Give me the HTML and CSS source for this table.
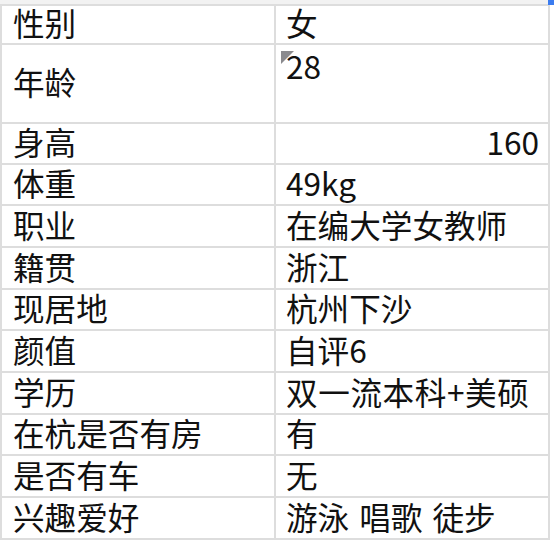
FILE: index.html
```html
<!DOCTYPE html>
<html lang="zh-CN">
<head>
<meta charset="utf-8">
<link rel="stylesheet" href="styles.css">
</head>
<body>
<div class="topbar"><span class="sel-handle"></span></div>
<div class="sheet">
  <div class="cell">性别</div><div class="cell">女</div>
  <div class="cell">年龄</div><div class="cell cell-top has-note">28</div>
  <div class="cell">身高</div><div class="cell cell-num">160</div>
  <div class="cell">体重</div><div class="cell">49kg</div>
  <div class="cell">职业</div><div class="cell">在编大学女教师</div>
  <div class="cell">籍贯</div><div class="cell">浙江</div>
  <div class="cell">现居地</div><div class="cell">杭州下沙</div>
  <div class="cell">颜值</div><div class="cell">自评6</div>
  <div class="cell">学历</div><div class="cell cell-wide">双一流本科+美硕</div>
  <div class="cell">在杭是否有房</div><div class="cell">有</div>
  <div class="cell">是否有车</div><div class="cell">无</div>
  <div class="cell">兴趣爱好</div><div class="cell cell-words">游泳 唱歌 徒步</div>
</div>
</body>
</html>
```
FILE: styles.css
```css
html, body {
  margin: 0;
  padding: 0;
  background: #ffffff;
}
body {
  width: 554px;
  height: 540px;
  overflow: hidden;
  font-family: "Noto Sans CJK SC", "Noto Sans", sans-serif;
  color: #111111;
}
.topbar {
  height: 4px;
  background: #f2f2f2;
  display: flex;
  justify-content: flex-end;
}
.sel-handle {
  width: 6px;
  height: 5px;
  background: #3b7cf0;
  position: relative;
  z-index: 2;
}
.sheet {
  display: grid;
  width: 546px;
  grid-template-columns: 272px 272px;
  grid-template-rows: 37px 77px 39px 39px 40px 40px 39px 40px 40px 39px 40px 40px;
  gap: 2px;
  padding: 2px;
  background: #dddddd;
}
.cell {
  background: #ffffff;
  display: flex;
  align-items: center;
  font-size: 31.6px;
  line-height: 1;
  padding-left: 11px;
  padding-bottom: 3px;
  white-space: pre;
  position: relative;
}
.cell:nth-child(even) {
  padding-left: 10px;
}
.cell-top {
  align-items: flex-start;
  padding-top: 5px;
}
.cell-num {
  justify-content: flex-end;
  padding-right: 9px;
}
.cell-wide {
  letter-spacing: 0.6px;
}
.cell-words {
  word-spacing: 3px;
}
.has-note::before {
  content: "";
  position: absolute;
  left: 5px;
  top: 6px;
  width: 0;
  height: 0;
  border-top: 13px solid #8a8a8e;
  border-right: 13px solid transparent;
}
```
